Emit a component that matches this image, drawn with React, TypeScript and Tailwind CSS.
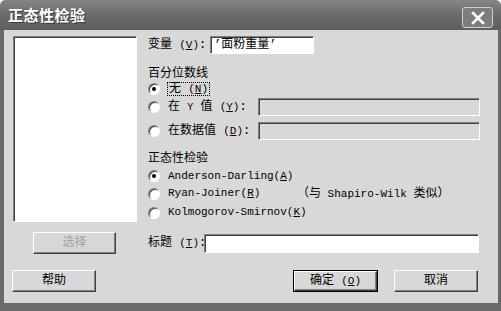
const cjk = { fontFamily: '"Liberation Mono", "Noto Sans CJK SC", monospace' };

function Radio({ checked }: { checked?: boolean }) {
  return (
    <span className="relative w-[12px] h-[12px] rounded-full bg-white border border-t-[#808080] border-l-[#808080] border-r-white border-b-white shadow-[inset_1px_1px_0_#404040] flex items-center justify-center shrink-0">
      {checked && <span className="w-[4px] h-[4px] rounded-full bg-black" />}
    </span>
  );
}

function Sunken({ className = '', children }: { className?: string; children?: React.ReactNode }) {
  return (
    <div
      className={`border border-t-[#808080] border-l-[#808080] border-r-white border-b-white shadow-[inset_1px_1px_0_#404040] ${className}`}
    >
      {children}
    </div>
  );
}

function Key({ k }: { k: string }) {
  return (
    <span className="text-[11px]">
      (<u>{k}</u>)
    </span>
  );
}

function Button({ label, className = '', disabled, isDefault }: { label: React.ReactNode; className?: string; disabled?: boolean; isDefault?: boolean }) {
  return (
    <div className={`${isDefault ? 'border border-black' : ''} ${className}`}>
      <div
        className={`h-full w-full flex items-center justify-center border border-t-white border-l-white border-r-[#404040] border-b-[#404040] shadow-[inset_-1px_-1px_0_#808080] bg-[#d8d8d8] text-[12px] whitespace-nowrap ${disabled ? 'text-[#a0a0a0]' : 'text-black'}`}
      >
        {label}
      </div>
    </div>
  );
}

export default function App() {
  return (
    <div className="w-[501px] h-[311px] bg-[#6a6a6a] flex flex-col overflow-hidden rounded-t-[6px]" style={cjk}>
      {/* title bar */}
      <div className="h-[30px] shrink-0 flex items-center justify-between pl-[8px] pr-[8px] bg-gradient-to-b from-[#858585] via-[#6b6b6b] to-[#5e5e5e]">
        <span
          className="text-white text-[15px] font-bold tracking-[0.5px] [text-shadow:1px_1px_0_#3a3a3a]"
          style={{ fontFamily: '"Noto Sans CJK SC", sans-serif' }}
        >
          正态性检验
        </span>
        <div className="w-[31px] h-[21px] mt-[5px] rounded-[3px] border border-[#d0d0d0] bg-[#7d7d7d] flex items-center justify-center">
          <svg width="14" height="14" viewBox="0 0 14 14">
            <path d="M2 2 L12 12 M12 2 L2 12" stroke="white" strokeWidth="2.6" strokeLinecap="square" />
          </svg>
        </div>
      </div>

      {/* client */}
      <div className="flex-1 ml-[4px] mr-[3px] mb-[8px] bg-[#d8d8d8] flex flex-col pt-[6px] text-[12px] text-black leading-none whitespace-nowrap">
        <div className="flex">
          <Sunken className="ml-[9px] w-[124px] h-[186px] bg-white" />
          <div className="ml-[11px] w-[332px] flex flex-col">
            <div className="h-[18px] flex items-center">
              <span className="w-[62px]">
                变量 <Key k="V" />:
              </span>
              <Sunken className="w-[104px] h-[18px] bg-white flex items-center pl-[3px]">
                <span>’面粉重量’</span>
              </Sunken>
            </div>
            <div className="mt-[13px] h-[14px] flex items-center">百分位数线</div>
            <div className="h-[14px] mt-[1px] flex items-center gap-[8px]">
              <Radio checked />
              <span className="outline-1 outline-dotted outline-black px-[1px]">
                无 <Key k="N" />
              </span>
            </div>
            <div className="mt-[2px] h-[18px] flex items-center">
              <div className="w-[110px] flex items-center gap-[8px]">
                <Radio />
                <span>
                  在 <span className="text-[10px]">Y</span> 值 <Key k="Y" />:
                </span>
              </div>
              <Sunken className="flex-1 h-[18px] bg-[#d8d8d8]" />
            </div>
            <div className="mt-[6px] h-[18px] flex items-center">
              <div className="w-[110px] flex items-center gap-[8px]">
                <Radio />
                <span>
                  在数据值 <Key k="D" />:
                </span>
              </div>
              <Sunken className="flex-1 h-[18px] bg-[#d8d8d8]" />
            </div>
            <div className="mt-[12px] h-[14px] flex items-center">正态性检验</div>
            <div className="mt-[3px] h-[14px] flex items-center gap-[8px]">
              <Radio checked />
              <span className="text-[11px]">
                Anderson-Darling(<u>A</u>)
              </span>
            </div>
            <div className="mt-[3px] h-[15px] flex items-center gap-[8px]">
              <Radio />
              <span className="text-[11px] w-[121px]">
                Ryan-Joiner(<u>R</u>)
              </span>
              <span className="text-[11px]">
                <span className="text-[12px]">（与</span> Shapiro-Wilk <span className="text-[12px]">类似）</span>
              </span>
            </div>
            <div className="mt-[4px] h-[15px] flex items-center gap-[8px]">
              <Radio />
              <span className="text-[11px]">
                Kolmogorov-Smirnov(<u>K</u>)
              </span>
            </div>
          </div>
        </div>

        <div className="flex mt-[10px] items-center">
          <div className="ml-[9px] w-[124px]">
            <Button label="选择" disabled className="ml-[20px] w-[83px] h-[22px]" />
          </div>
          <div className="ml-[11px] w-[331px] flex items-center">
            <span className="w-[56px]">
              标题 <Key k="T" />:
            </span>
            <Sunken className="flex-1 h-[19px] bg-white" />
          </div>
        </div>

        <div className="flex mt-[16px] pr-[20px]">
          <Button label="帮助" className="ml-[8px] w-[84px] h-[22px]" />
          <div className="flex-1" />
          <Button
            label={
              <span>
                确定 <Key k="O" />
              </span>
            }
            isDefault
            className="w-[85px] h-[22px]"
          />
          <Button label="取消" className="ml-[16px] w-[84px] h-[22px]" />
        </div>
      </div>
    </div>
  );
}
